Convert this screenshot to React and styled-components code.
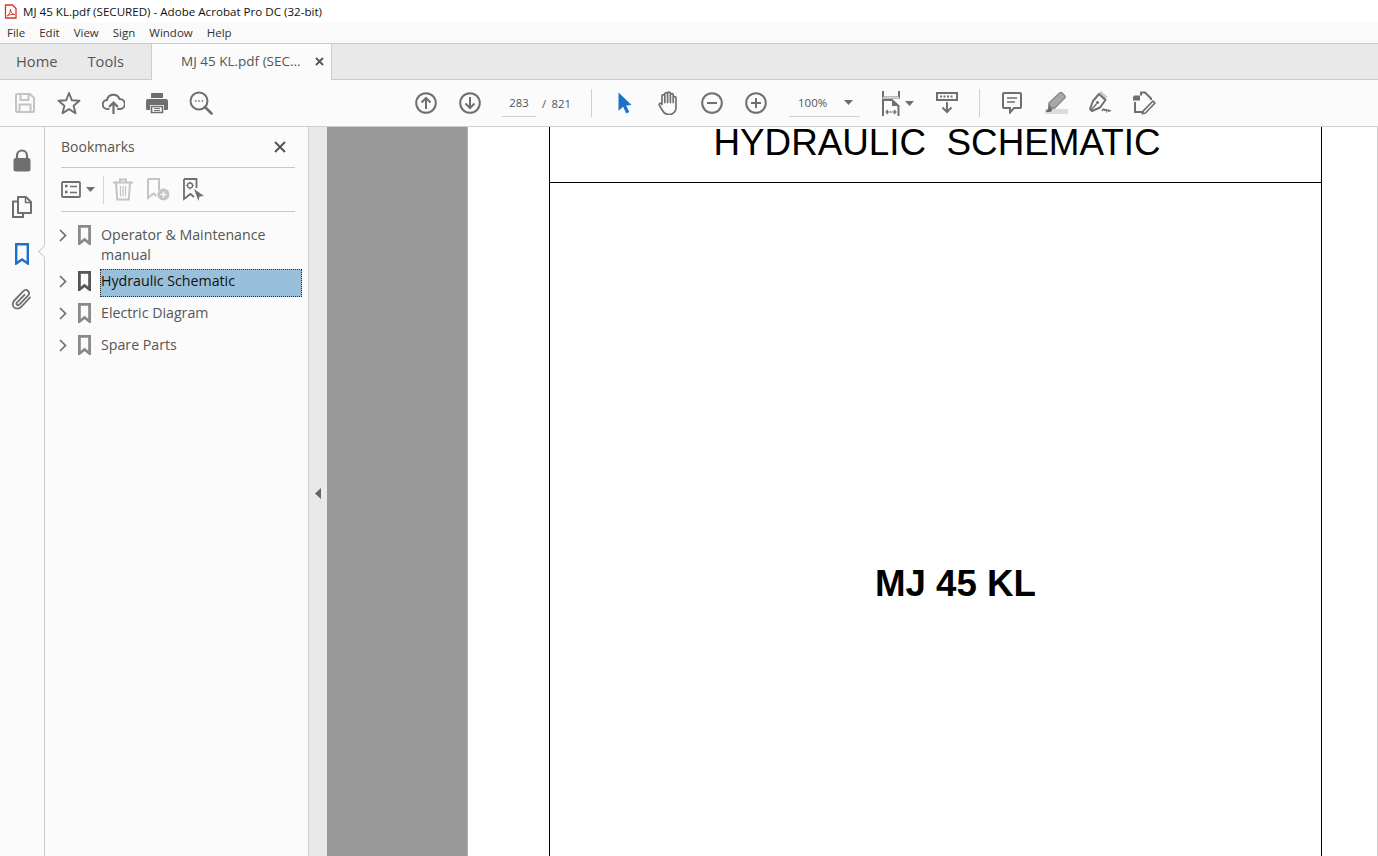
import React from "react";
import styled, { createGlobalStyle } from "styled-components";

const UI_FONT = `"Open Sans", "Noto Sans", "Liberation Sans", sans-serif`;

const GlobalStyle = createGlobalStyle`
  html, body {
    margin: 0;
    padding: 0;
    height: 100%;
    overflow: hidden;
    background: #fff;
  }
  * { box-sizing: border-box; }
`;

const Window = styled.div`
  width: 1378px;
  height: 856px;
  display: flex;
  flex-direction: column;
  font-family: ${UI_FONT};
  color: #4b4b4b;
  overflow: hidden;
`;

const TitleBar = styled.div`
  height: 23px;
  background: #fff;
  display: flex;
  align-items: center;
  padding-left: 4px;
  gap: 6px;
  font-size: 11.6px;
  color: #111;
  white-space: nowrap;
`;

const MenuBar = styled.div`
  height: 21px;
  padding: 0 0 1px 7px;
  background: #fafafa;
  border-bottom: 1px solid #c8c8c8;
  display: flex;
  align-items: center;
  gap: 14px;
  font-size: 11.5px;
  color: #333;
`;

const TabBar = styled.div`
  height: 36px;
  background: #e9e9e9;
  border-bottom: 1px solid #cdcdcd;
  display: flex;
`;

const NavTab = styled.div`
  font-size: 14.7px;
  line-height: 34px;
  color: #555;
  margin-left: ${(p) => p.$left}px;
`;

const ActiveTab = styled.div`
  margin-left: 27px;
  width: 181px;
  height: 36px;
  background: #fbfbfb;
  border-left: 1px solid #cdcdcd;
  border-right: 1px solid #cdcdcd;
  display: flex;
  align-items: center;
  padding: 0 7px 2px 29px;
  justify-content: space-between;
  font-size: 13.5px;
  color: #555;
  white-space: nowrap;
`;

const Toolbar = styled.div`
  height: 47px;
  background: #fbfbfb;
  border-bottom: 1px solid #cdcdcd;
  display: flex;
  align-items: center;
  padding-left: 3px;
`;

const ToolButton = styled.div`
  width: ${(p) => p.$w || 44}px;
  height: 46px;
  flex: none;
  display: flex;
  align-items: center;
  justify-content: center;
  margin-left: ${(p) => p.$left || 0}px;
  gap: ${(p) => p.$gap || 0}px;
`;

const Sep = styled.div`
  width: 1px;
  height: 28px;
  flex: none;
  background: #cfcfcf;
  margin-left: ${(p) => p.$left}px;
  margin-right: ${(p) => p.$right}px;
`;

const PageField = styled.div`
  margin-left: 10px;
  width: 34px;
  height: 27px;
  flex: none;
  border-bottom: 1px solid #cfcfcf;
  text-align: center;
  font-size: 11.3px;
  line-height: 26px;
  color: #555;
`;

const PageTotal = styled.div`
  margin-left: 6px;
  width: 29px;
  flex: none;
  display: flex;
  justify-content: space-between;
  font-size: 11.3px;
  color: #555;
`;

const ZoomField = styled.div`
  margin-left: 11px;
  width: 71px;
  height: 27px;
  flex: none;
  border-bottom: 1px solid #cfcfcf;
  display: flex;
  align-items: center;
  justify-content: space-between;
  padding: 0 7px 0 9px;
  font-size: 11.5px;
  color: #555;
`;

const Main = styled.div`
  flex: 1;
  display: flex;
  min-height: 0;
`;

const Rail = styled.div`
  width: 45px;
  flex: none;
  background: #fbfbfb;
  border-right: 1px solid #cdcdcd;
  display: flex;
  flex-direction: column;
  align-items: center;
  padding-top: 11px;
`;

const RailIcon = styled.div`
  height: 46px;
  padding-top: ${(p) => p.$shift || 0}px;
  display: flex;
  align-items: center;
  justify-content: center;
  position: relative;
  width: 100%;
`;

const RailNotch = styled.div`
  position: absolute;
  right: -5px;
  top: 17px;
  width: 9px;
  height: 9px;
  background: #fbfbfb;
  border-left: 1px solid #cdcdcd;
  border-bottom: 1px solid #cdcdcd;
  transform: rotate(45deg);
`;

const Panel = styled.div`
  width: 264px;
  flex: none;
  background: #fbfbfb;
  border-right: 1px solid #cdcdcd;
  padding: 0 13px 0 16px;
`;

const PanelHead = styled.div`
  height: 41px;
  border-bottom: 1px solid #c8c8c8;
  display: flex;
  align-items: center;
  justify-content: space-between;
  padding: 0 9px 1px 0;
  font-size: 14px;
  color: #555;
`;

const PanelTools = styled.div`
  height: 44px;
  border-bottom: 1px solid #c8c8c8;
  display: flex;
  align-items: center;
`;

const PanelTool = styled.div`
  flex: none;
  display: flex;
  align-items: center;
  margin-left: ${(p) => p.$left || 0}px;
  gap: ${(p) => p.$gap || 0}px;
`;

const PanelSep = styled.div`
  width: 1px;
  height: 28px;
  background: #d5d5d5;
  margin-left: 8px;
`;

const Tree = styled.div`
  margin: 7px -7px 0 -3px;
`;

const TreeRow = styled.div`
  display: flex;
  align-items: flex-start;
  min-height: 32px;
  padding-top: 5px;
`;

const RowIcons = styled.div`
  width: 42px;
  height: 22px;
  flex: none;
  display: flex;
  align-items: center;
  padding-left: 1px;
  gap: 11px;
`;

const RowLabel = styled.div`
  flex: 1;
  min-height: 28px;
  margin-top: -1px;
  padding: 2px 0 0 1px;
  font-size: 14.2px;
  line-height: 20px;
  color: ${(p) => (p.$selected ? "#111" : "#555")};
  background: ${(p) => (p.$selected ? "#99c0da" : "transparent")};
  outline: ${(p) => (p.$selected ? "1px dotted #333" : "none")};
  outline-offset: -1px;
`;

const Splitter = styled.div`
  width: 18px;
  flex: none;
  background: #e9e9e9;
  display: flex;
  align-items: center;
  padding: 3px 0 0 6px;
`;

const Gutter = styled.div`
  width: 141px;
  flex: none;
  background: #999;
  border-right: 1px solid #b5b5b5;
`;

const PageSheet = styled.div`
  flex: 1;
  background: #fff;
  border-right: 1px solid #cdcdcd;
  padding: 0 55px 0 81px;
`;

const Frame = styled.div`
  height: 100%;
  border-left: 1px solid #000;
  border-right: 1px solid #000;
  display: flex;
  flex-direction: column;
  font-family: "Liberation Sans", Arial, sans-serif;
  color: #000;
`;

const FrameHead = styled.div`
  height: 56px;
  border-bottom: 1px solid #000;
  font-size: 36.8px;
  line-height: 32px;
  text-align: center;
  white-space: pre;
  padding-left: 3px;
`;

const FrameBody = styled.div`
  flex: 1;
  padding: 378px 0 0 40px;
  font-size: 36.7px;
  line-height: 46px;
  font-weight: 700;
  text-align: center;
`;

const Svg = styled.svg`
  display: block;
  flex: none;
  fill: none;
`;

const GREY = "#6f6f6f";
const LIGHT = "#c4c4c4";

const Icon = ({ w = 24, h = 24, box, children }) => (
  <Svg width={w} height={h} viewBox={box || `0 0 ${w} ${h}`}>
    {children}
  </Svg>
);

const Caret = ({ color = GREY }) => (
  <Icon w={9} h={5}>
    <path d="M0 0h9L4.500 5z" fill={color} />
  </Icon>
);

const PdfIcon = () => (
  <Icon w={13} h={15}>
    <path d="M1.500 1h7l3.500 3.500v9.500h-10.500z" fill="#fff" stroke="#d8352a" strokeWidth="1.300" />
    <path d="M3 12c2-1 3.500-4 3.500-7 0 3 1.500 5 4 5.500-2.500-.5-5 0-7.500 1.500z" stroke="#d8352a" strokeWidth="1" />
  </Icon>
);

const SaveIcon = () => (
  <Icon w={20} h={20}>
    <path d="M1 2.500a1.500 1.500 0 0 1 1.500-1.500h12.500l4 4v12.500a1.500 1.500 0 0 1-1.500 1.500h-15a1.500 1.500 0 0 1-1.500-1.500z" stroke={LIGHT} strokeWidth="2" />
    <path d="M5.500 1.500v5.500h8v-5.500M4.500 19v-7.500h11v7.500" stroke={LIGHT} strokeWidth="2" />
  </Icon>
);

const StarIcon = () => (
  <Icon w={24} h={24}>
    <path d="M12 2l2.900 7.300 7.600.5-5.900 4.900 1.900 7.600-6.500-4.200-6.500 4.200 1.900-7.600-5.900-4.900 7.600-.5z" stroke={GREY} strokeWidth="1.900" strokeLinejoin="round" />
  </Icon>
);

const CloudIcon = () => (
  <Icon w={23} h={23}>
    <path d="M6.500 17h-1a4.500 4.500 0 0 1-.5-9 6.500 6.500 0 0 1 12.500-1 5 5 0 0 1 .5 10h-2" stroke={GREY} strokeWidth="2" strokeLinecap="round" />
    <path d="M11.500 22v-11M7 15l4.500-4.500 4.500 4.500" stroke={GREY} strokeWidth="2.200" />
  </Icon>
);

const PrintIcon = () => (
  <Icon w={22} h={22}>
    <path d="M5 6v-4.500a.5.500 0 0 1 .5-.5h11a.5.500 0 0 1 .5.5v4.500z" fill={GREY} />
    <path d="M2 7h18a2 2 0 0 1 2 2v8a1 1 0 0 1-1 1h-3v-5h-14v5h-3a1 1 0 0 1-1-1v-8a2 2 0 0 1 2-2z" fill={GREY} />
    <path d="M5.500 14.500h11v6h-11z" stroke={GREY} strokeWidth="1.600" />
    <path d="M8 16.500h6M8 18.500h6" stroke={GREY} strokeWidth="1" />
  </Icon>
);

const FindIcon = () => (
  <Icon w={24} h={24}>
    <circle cx="10" cy="10" r="8.500" stroke={GREY} strokeWidth="2" />
    <path d="M16 16l6.500 6.500" stroke={GREY} strokeWidth="2.600" strokeLinecap="round" />
    <path d="M6 10h1.500M9.300 10h1.500M12.600 10h1.500" stroke={GREY} strokeWidth="1.600" />
  </Icon>
);

const CircleIcon = ({ children }) => (
  <Icon w={22} h={22}>
    <circle cx="11" cy="11" r="9.800" stroke={GREY} strokeWidth="2" />
    {children}
  </Icon>
);

const ArrowUpIcon = () => (
  <CircleIcon>
    <path d="M11 17v-11M6.500 10.500l4.500-4.500 4.500 4.500" stroke={GREY} strokeWidth="2" />
  </CircleIcon>
);

const ArrowDownIcon = () => (
  <CircleIcon>
    <path d="M11 5v11M6.500 11.500l4.500 4.500 4.500-4.500" stroke={GREY} strokeWidth="2" />
  </CircleIcon>
);

const MinusIcon = () => (
  <CircleIcon>
    <path d="M6 11h10" stroke={GREY} strokeWidth="2" />
  </CircleIcon>
);

const PlusIcon = () => (
  <CircleIcon>
    <path d="M6 11h10M11 6v10" stroke={GREY} strokeWidth="2" />
  </CircleIcon>
);

const CursorIcon = () => (
  <Icon w={16} h={22} box="-2 0 16 22">
    <path d="M0.500 0.500l13 12.500-5.300.5 3 6.500-3 1.500-3-6.700-4.700 4z" fill="#1d72c8" />
  </Icon>
);

const HandIcon = () => (
  <Icon w={22} h={24}>
    <path
      d="M5 13.500v-8.500a1.400 1.400 0 0 1 2.800 0v6.500v-8.500a1.400 1.400 0 0 1 2.800 0v8.500v-9a1.400 1.400 0 0 1 2.800 0v9v-7.500a1.400 1.400 0 0 1 2.800 0v7.500v-4.500a1.400 1.400 0 0 1 2.800 0v9.500c0 4-2.800 7-7 7-3.500 0-5.200-1.500-6.500-4l-3-5c-1-1.700 1.200-3 2.300-1.700z"
      stroke={GREY}
      strokeWidth="1.700"
      strokeLinejoin="round"
    />
  </Icon>
);

const FitIcon = () => (
  <Icon w={18} h={25}>
    <path d="M1 0v6.500h16v-6.500" stroke={GREY} strokeWidth="2" />
    <path d="M1 6.500h16" stroke="#d5d5d5" strokeWidth="1.500" />
    <path d="M1 25v-16h9l6.500 6v10" stroke={GREY} strokeWidth="2" />
    <path d="M10 9v6h6.500z" fill={GREY} />
    <path d="M4 21h10M6 19l-2 2 2 2M12 19l2 2-2 2" stroke={GREY} strokeWidth="1.200" />
  </Icon>
);

const ScrollIcon = () => (
  <Icon w={22} h={22}>
    <path d="M1 1h20v7h-20z" stroke={GREY} strokeWidth="2" />
    <path d="M4 4.500h14" stroke={GREY} strokeWidth="2" strokeDasharray="2 1.500" />
    <path d="M11 10v10M6.500 15.500l4.500 4.500 4.500-4.500" stroke={GREY} strokeWidth="2" />
  </Icon>
);

const CommentIcon = () => (
  <Icon w={20} h={22}>
    <path d="M1 2a1 1 0 0 1 1-1h16a1 1 0 0 1 1 1v13a1 1 0 0 1-1 1h-6l-4 4.500v-4.500h-6a1 1 0 0 1-1-1z" stroke={GREY} strokeWidth="2" />
    <path d="M5 6h10M5 10h8" stroke={GREY} strokeWidth="1.500" />
  </Icon>
);

const HighlightIcon = () => (
  <Icon w={23} h={22}>
    <path d="M0 17h23v5h-23z" fill="#dcdcdc" />
    <path d="M4 11l10.500-10a2 2 0 0 1 3 .3l2 2.200a2 2 0 0 1 0 2.800l-10 10-5.500-.5z" fill="#a8a8a8" stroke="#8a8a8a" strokeWidth="1.400" />
    <path d="M4 11.500l-.8 5-2.700 3.500h5l2-2" fill={GREY} />
  </Icon>
);

const SignIcon = () => (
  <Icon w={24} h={24}>
    <path d="M12 1l6.500 6" stroke="#c9c9c9" strokeWidth="3" />
    <path d="M11 3l6.500 6-5.500 7.500-8 3.500-2-2 3-8z" stroke={GREY} strokeWidth="2" strokeLinejoin="round" />
    <path d="M3 19l5.500-6" stroke={GREY} strokeWidth="1.500" />
    <circle cx="9.500" cy="11.500" r="1.600" fill={GREY} />
    <path d="M14 20c1.500-3 2.500-2.500 2.500 0 1-2 2-2 2.300 0 .8-1.500 1.800-1.500 2.200 0 .5-.3 1-.5 1.800-.5" stroke={GREY} strokeWidth="1.500" />
  </Icon>
);

const EditIcon = () => (
  <Icon w={24} h={24}>
    <path d="M1 6.500a2 2 0 0 1 2-2h5v5h-7z" fill={GREY} />
    <path d="M8 1.500h5l6 6v1.500M3 11v10h8M9 1.500v3" stroke={GREY} strokeWidth="2" />
    <path d="M21 10l2 2-9.500 10-3 .8.800-3z" fill="#fbfbfb" stroke={GREY} strokeWidth="1.700" strokeLinejoin="round" />
  </Icon>
);

const LockIcon = () => (
  <Icon w={18} h={25}>
    <path d="M4 10v-3.500a5 5 0 0 1 10 0v3.500" stroke={GREY} strokeWidth="2.200" />
    <rect x="0.500" y="9" width="17" height="13.500" rx="2.500" fill={GREY} />
  </Icon>
);

const PagesIcon = () => (
  <Icon w={20} h={22}>
    <path d="M6 1h8l5 5v11h-13z" stroke={GREY} strokeWidth="2" strokeLinejoin="round" />
    <path d="M13.500 1v5.500h5" stroke={GREY} strokeWidth="1.500" />
    <path d="M6 5.500h-5v15.500h10v-4" stroke={GREY} strokeWidth="2" />
  </Icon>
);

const BookmarkGlyph = ({ w = 13, h = 20, color = GREY, weight = 2.8, notch = 5.5 }) => (
  <Icon w={w} h={h}>
    <path
      d={`M${weight / 2} ${weight / 2}H${w - weight / 2}V${h - 1.5}L${w / 2} ${h - notch}L${weight / 2} ${h - 1.5}Z`}
      stroke={color}
      strokeWidth={weight}
    />
  </Icon>
);

const ClipIcon = () => (
  <Icon w={22} h={22}>
    <path
      d="M19 9.500l-9 9.500c-2 2-5.200 2-7 .3-1.800-1.800-1.700-4.800.3-6.800l9-9.300c1.400-1.400 3.500-1.500 4.800-.2 1.300 1.300 1.100 3.400-.3 4.800l-8.500 8.800c-.7.700-1.800.8-2.400.2-.6-.6-.5-1.700.2-2.400l7.400-7.600"
      stroke={GREY}
      strokeWidth="1.800"
      strokeLinecap="round"
    />
  </Icon>
);

const CloseIcon = ({ size = 12, weight = 2, color = "#555" }) => (
  <Icon w={size} h={size}>
    <path d={`M1 1L${size - 1} ${size - 1}M${size - 1} 1L1 ${size - 1}`} stroke={color} strokeWidth={weight} />
  </Icon>
);

const ListIcon = () => (
  <Icon w={20} h={17}>
    <rect x="1" y="1" width="18" height="15" rx="1" stroke={GREY} strokeWidth="1.800" />
    <path d="M4 5h2.500M4 11h2.500" stroke={GREY} strokeWidth="2.500" />
    <path d="M9 5.500h7M9 11.500h7" stroke={GREY} strokeWidth="1.500" />
  </Icon>
);

const TrashIcon = () => (
  <Icon w={20} h={23}>
    <path d="M0 4.500h20M7 4v-2.500h6v2.500" stroke="#c4c4c4" strokeWidth="2" />
    <path d="M3 5l1.200 16.500h11.600l1.200-16.500" stroke="#c4c4c4" strokeWidth="2" />
    <path d="M7.500 8v10.500M10 8v10.500M12.500 8v10.500" stroke="#c4c4c4" strokeWidth="1.200" />
  </Icon>
);

const AddBookmarkIcon = () => (
  <Icon w={23} h={23}>
    <path d="M1 1h11v11M1 1v19l5.500-4.500 3 2.500" stroke="#c4c4c4" strokeWidth="2" />
    <circle cx="16.500" cy="16.500" r="6" fill="#c4c4c4" />
    <path d="M13.500 16.500h6M16.500 13.500v6" stroke="#fbfbfb" strokeWidth="1.500" />
  </Icon>
);

const TagBookmarkIcon = () => (
  <Icon w={21} h={23}>
    <path d="M1 1h12.500v9M1 1v20l6.500-5 3.500 3" stroke={GREY} strokeWidth="1.800" />
    <circle cx="7" cy="7.500" r="2.500" stroke={GREY} strokeWidth="1.300" />
    <path d="M7 3.500v1M7 10.500v1M3 7.500h1M10 7.500h1" stroke={GREY} strokeWidth="1" />
    <path d="M11 11l10 7-4.500.5-1 4.500z" fill={GREY} />
  </Icon>
);

const ChevronIcon = () => (
  <Icon w={8} h={13}>
    <path d="M1 1l5.500 5.500-5.500 5.500" stroke={GREY} strokeWidth="1.700" />
  </Icon>
);

const CollapseIcon = () => (
  <Icon w={6} h={11}>
    <path d="M6 0v11L0 5.500z" fill="#666" />
  </Icon>
);

const bookmarks = [
  { name: "Operator & Maintenance manual" },
  { name: "Hydraulic Schematic", selected: true },
  { name: "Electric Diagram" },
  { name: "Spare Parts" },
];

export default function App() {
  return (
    <Window>
      <GlobalStyle />
      <TitleBar>
        <PdfIcon />
        MJ 45 KL.pdf (SECURED) - Adobe Acrobat Pro DC (32-bit)
      </TitleBar>
      <MenuBar>
        <span>File</span>
        <span>Edit</span>
        <span>View</span>
        <span>Sign</span>
        <span>Window</span>
        <span>Help</span>
      </MenuBar>
      <TabBar>
        <NavTab $left={16}>Home</NavTab>
        <NavTab $left={30}>Tools</NavTab>
        <ActiveTab>
          MJ 45 KL.pdf (SEC...
          <CloseIcon size={9} weight={1.8} />
        </ActiveTab>
      </TabBar>
      <Toolbar>
        <ToolButton><SaveIcon /></ToolButton>
        <ToolButton><StarIcon /></ToolButton>
        <ToolButton><CloudIcon /></ToolButton>
        <ToolButton><PrintIcon /></ToolButton>
        <ToolButton><FindIcon /></ToolButton>
        <ToolButton $left={181}><ArrowUpIcon /></ToolButton>
        <ToolButton><ArrowDownIcon /></ToolButton>
        <PageField>283</PageField>
        <PageTotal>
          <span>/</span>
          <span>821</span>
        </PageTotal>
        <Sep $left={20} $right={10} />
        <ToolButton><CursorIcon /></ToolButton>
        <ToolButton><HandIcon /></ToolButton>
        <ToolButton><MinusIcon /></ToolButton>
        <ToolButton><PlusIcon /></ToolButton>
        <ZoomField>
          100%
          <Caret />
        </ZoomField>
        <ToolButton $left={16} $w={44} $gap={5}>
          <FitIcon />
          <Caret />
        </ToolButton>
        <ToolButton $left={5}><ScrollIcon /></ToolButton>
        <Sep $left={10} $right={10} />
        <ToolButton><CommentIcon /></ToolButton>
        <ToolButton><HighlightIcon /></ToolButton>
        <ToolButton><SignIcon /></ToolButton>
        <ToolButton><EditIcon /></ToolButton>
      </Toolbar>
      <Main>
        <Rail>
          <RailIcon><LockIcon /></RailIcon>
          <RailIcon><PagesIcon /></RailIcon>
          <RailIcon $shift={2}>
            <BookmarkGlyph w={14} h={22} color="#1d72c8" weight={2.4} />
            <RailNotch />
          </RailIcon>
          <RailIcon><ClipIcon /></RailIcon>
        </Rail>
        <Panel>
          <PanelHead>
            Bookmarks
            <CloseIcon />
          </PanelHead>
          <PanelTools>
            <PanelTool $gap={5}>
              <ListIcon />
              <Caret />
            </PanelTool>
            <PanelSep />
            <PanelTool $left={9}><TrashIcon /></PanelTool>
            <PanelTool $left={14}><AddBookmarkIcon /></PanelTool>
            <PanelTool $left={13}><TagBookmarkIcon /></PanelTool>
          </PanelTools>
          <Tree>
            {bookmarks.map((b) => (
              <TreeRow key={b.name}>
                <RowIcons>
                  <ChevronIcon />
                  <BookmarkGlyph color={b.selected ? "#555" : "#8a8a8a"} />
                </RowIcons>
                <RowLabel $selected={b.selected}>{b.name}</RowLabel>
              </TreeRow>
            ))}
          </Tree>
        </Panel>
        <Splitter>
          <CollapseIcon />
        </Splitter>
        <Gutter />
        <PageSheet>
          <Frame>
            <FrameHead>{"HYDRAULIC  SCHEMATIC"}</FrameHead>
            <FrameBody>MJ 45 KL</FrameBody>
          </Frame>
        </PageSheet>
      </Main>
    </Window>
  );
}
